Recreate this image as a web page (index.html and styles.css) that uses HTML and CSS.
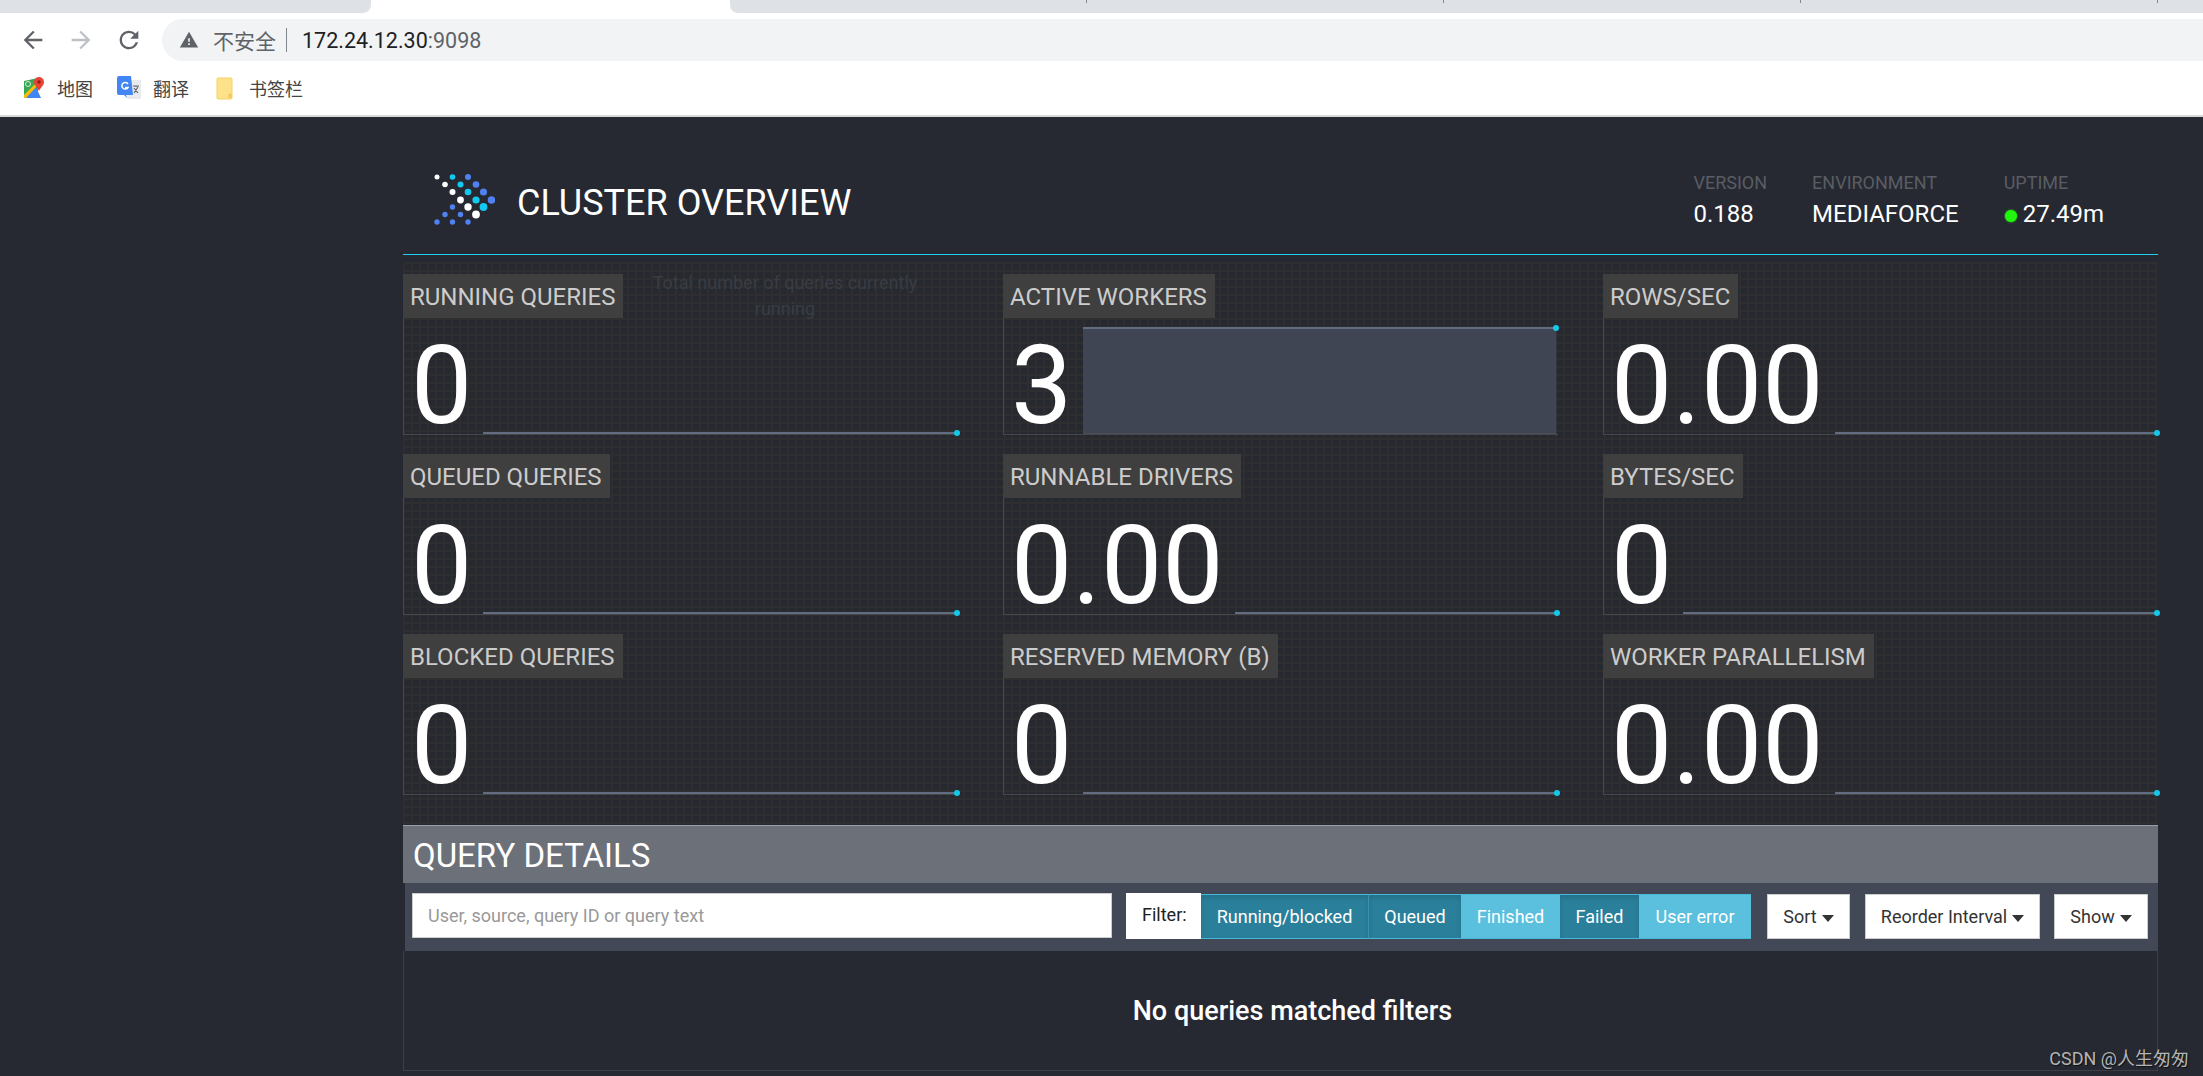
FILE: index.html
```html
<!DOCTYPE html>
<html lang="en">
<head>
<meta charset="utf-8">
<title>Cluster Overview</title>
<link rel="stylesheet" href="styles.css">
</head>
<body>
<div class="tabstrip">
  <div class="tab-left"></div>
  <div class="tab-active"></div>
  <div class="tab-rest">
    <i class="sep s1"></i><i class="sep s2"></i><i class="sep s3"></i><i class="sep s4"></i>
  </div>
</div>
<div class="navbar">
  <svg class="nav-icon" viewBox="0 0 24 24"><path d="M20 11H7.830l5.590-5.590L12 4l-8 8 8 8 1.410-1.410L7.830 13H20v-2z" fill="#5f6368"/></svg>
  <svg class="nav-icon" viewBox="0 0 24 24"><path d="M12 4l-1.410 1.410L16.170 11H4v2h12.170l-5.580 5.590L12 20l8-8z" fill="#bdc1c6"/></svg>
  <svg class="nav-icon" viewBox="0 0 24 24"><path d="M17.650 6.350A7.958 7.958 0 0 0 12 4c-4.420 0-7.990 3.580-7.990 8s3.570 8 7.990 8c3.730 0 6.840-2.550 7.730-6h-2.080A5.990 5.990 0 0 1 12 18c-3.310 0-6-2.690-6-6s2.690-6 6-6c1.660 0 3.140.690 4.220 1.780L13 11h7V4l-2.350 2.350z" fill="#5f6368"/></svg>
  <div class="omnibox">
    <svg class="warn" viewBox="0 0 24 24"><path d="M1 21h22L12 2 1 21zm12-3h-2v-2h2v2zm0-4h-2v-4h2v4z" fill="#5f6368"/></svg>
    <span class="insecure">不安全</span>
    <span class="omni-sep"></span>
    <span class="host">172.24.12.30</span><span class="port">:9098</span>
  </div>
</div>
<div class="bookmarks">
  <div class="bookmark bm-map">
    <svg class="bm-icon" viewBox="0 0 22 22"><path d="M1 4 15 1v17L1 21z" fill="#34a853"/><path d="M1 21 12 8l6 13z" fill="#4285f4"/><path d="M1 18 13 6l2 2L3 21H1z" fill="#fbbc04"/><circle cx="5" cy="7" r="2.500" fill="none" stroke="#dfe7e0" stroke-width="1"/><path d="M16 0a5 5 0 0 1 5 5c0 3.500-3 5-5 9-2-4-5-5.500-5-9a5 5 0 0 1 5-5z" fill="#ea4335"/><circle cx="16" cy="5" r="1.700" fill="#8a1f17"/></svg>
    <span>地图</span>
  </div>
  <div class="bookmark bm-trans">
    <svg class="bm-icon" viewBox="0 0 24 24"><rect x="10" y="4" width="14" height="19" rx="1" fill="#e8eaed"/><path d="M16 10h6M19 10v1M17 17l4-6M17 12l4 5" stroke="#5f6368" stroke-width="1.200" fill="none"/><path d="M2 0h12l2 19H9l1 3-3-3H2a2 2 0 0 1-2-2V2a2 2 0 0 1 2-2z" fill="#4285f4"/><path d="M11 8a3.300 3.300 0 1 0 0 3.500H8" fill="none" stroke="#fff" stroke-width="1.500"/></svg>
    <span>翻译</span>
  </div>
  <div class="bookmark bm-folder">
    <svg class="bm-icon" viewBox="0 0 18 23"><path d="M2 1h13a1 1 0 0 1 1 1v19a1 1 0 0 1-1 1H2a1 1 0 0 1-1-1V2a1 1 0 0 1 1-1z" fill="#fee28a" stroke="#f6d266"/><path d="M13 21v-3a1 1 0 0 1 2 0v3" fill="none" stroke="#e8b93c"/></svg>
    <span>书签栏</span>
  </div>
</div>

<main class="page">
  <div class="container">
    <header class="header">
      <div class="brand">
        <svg class="logo" viewBox="0 0 61 51">
          <circle cx="3" cy="3" r="2.500" fill="#fff"/><circle cx="18.500" cy="3" r="2.800" fill="#12c9f0"/><circle cx="34" cy="3" r="3" fill="#4f82f0"/>
          <circle cx="11" cy="10.500" r="2.800" fill="#fff"/><circle cx="26.500" cy="10.500" r="3" fill="#12c9f0"/><circle cx="42" cy="10.500" r="3.300" fill="#4f82f0"/>
          <circle cx="18.500" cy="18" r="3" fill="#fff"/><circle cx="34" cy="18" r="3.300" fill="#12c9f0"/><circle cx="49.500" cy="18" r="3.600" fill="#4f82f0"/>
          <circle cx="26.500" cy="26" r="3.400" fill="#fff"/><circle cx="42" cy="26" r="3.600" fill="#12c9f0"/><circle cx="57.500" cy="26" r="3.800" fill="#4f82f0"/>
          <circle cx="18.500" cy="33" r="2.700" fill="#4f82f0"/><circle cx="34" cy="33" r="3.700" fill="#fff"/><circle cx="49.500" cy="33" r="3.900" fill="#12c9f0"/>
          <circle cx="11" cy="40.500" r="2.700" fill="#4f82f0"/><circle cx="26.500" cy="40.500" r="2.700" fill="#4f82f0"/><circle cx="42" cy="40.500" r="3.900" fill="#fff"/>
          <circle cx="3" cy="48" r="2.700" fill="#4f82f0"/><circle cx="18.500" cy="48" r="2.700" fill="#4f82f0"/><circle cx="34" cy="48" r="2.700" fill="#4f82f0"/>
        </svg>
        <h1 class="title">CLUSTER OVERVIEW</h1>
      </div>
      <div class="meta">
        <div class="meta-item m-version"><div class="meta-label">VERSION</div><div class="meta-value">0.188</div></div>
        <div class="meta-item m-env"><div class="meta-label">ENVIRONMENT</div><div class="meta-value">MEDIAFORCE</div></div>
        <div class="meta-item"><div class="meta-label">UPTIME</div><div class="meta-value"><span class="status-dot"></span>27.49m</div></div>
      </div>
    </header>

    <section class="stats">
      <article class="stat">
        <div class="stat-label">RUNNING QUERIES</div>
        <div class="ghost-tip">Total number of queries currently running</div>
        <div class="stat-body"><span class="stat-value">0</span><div class="spark"><i class="spark-dot"></i></div></div>
      </article>
      <article class="stat">
        <div class="stat-label">ACTIVE WORKERS</div>
        <div class="stat-body"><span class="stat-value">3</span><div class="spark filled"><i class="spark-dot top"></i></div></div>
      </article>
      <article class="stat">
        <div class="stat-label">ROWS/SEC</div>
        <div class="stat-body"><span class="stat-value">0.00</span><div class="spark"><i class="spark-dot"></i></div></div>
      </article>
      <article class="stat">
        <div class="stat-label">QUEUED QUERIES</div>
        <div class="stat-body"><span class="stat-value">0</span><div class="spark"><i class="spark-dot"></i></div></div>
      </article>
      <article class="stat">
        <div class="stat-label">RUNNABLE DRIVERS</div>
        <div class="stat-body"><span class="stat-value">0.00</span><div class="spark"><i class="spark-dot"></i></div></div>
      </article>
      <article class="stat">
        <div class="stat-label">BYTES/SEC</div>
        <div class="stat-body"><span class="stat-value">0</span><div class="spark"><i class="spark-dot"></i></div></div>
      </article>
      <article class="stat">
        <div class="stat-label">BLOCKED QUERIES</div>
        <div class="stat-body"><span class="stat-value">0</span><div class="spark"><i class="spark-dot"></i></div></div>
      </article>
      <article class="stat">
        <div class="stat-label">RESERVED MEMORY (B)</div>
        <div class="stat-body"><span class="stat-value">0</span><div class="spark"><i class="spark-dot"></i></div></div>
      </article>
      <article class="stat">
        <div class="stat-label">WORKER PARALLELISM</div>
        <div class="stat-body"><span class="stat-value">0.00</span><div class="spark"><i class="spark-dot"></i></div></div>
      </article>
    </section>

    <section class="details">
      <h2 class="details-title">QUERY DETAILS</h2>
      <div class="toolbar">
        <input class="search" type="text" placeholder="User, source, query ID or query text">
        <div class="filter">
          <span class="filter-label">Filter:</span>
          <button class="seg on">Running/blocked</button>
          <button class="seg on">Queued</button>
          <button class="seg">Finished</button>
          <button class="seg on">Failed</button>
          <button class="seg">User error</button>
        </div>
        <button class="drop drop-sort">Sort<i class="caret"></i></button>
        <button class="drop drop-reorder">Reorder Interval<i class="caret"></i></button>
        <button class="drop drop-show">Show<i class="caret"></i></button>
      </div>
      <div class="empty">No queries matched filters</div>
    </section>
  </div>
  <div class="watermark">CSDN @人生匆匆</div>
</main>
</body>
</html>
```
FILE: styles.css
```css
* { box-sizing: border-box; }
html, body { margin: 0; height: 100%; overflow: hidden; }
body { background: #262932; font-family: Roboto, "Noto Sans CJK SC", sans-serif; display: flex; flex-direction: column; }

.tabstrip { height: 13px; display: flex; background: #fff; flex: none; }
.tab-left { width: 371px; background: #dee1e6; border-bottom-right-radius: 8px; }
.tab-active { width: 359px; background: #fff; }
.tab-rest { flex: 1; background: #dee1e6; border-bottom-left-radius: 8px; position: relative; }
.sep { position: absolute; top: 0; width: 1px; height: 3px; background: #888; }
.s1 { left: 356px; } .s2 { left: 713px; } .s3 { left: 1070px; } .s4 { left: 1427px; }

.navbar { height: 48px; background: #fff; flex: none; display: flex; align-items: flex-start; padding: 6px 0 0 19px; }
.nav-icon { width: 28px; height: 28px; margin: 7px 20px 0 0; flex: none; }
.nav-icon:nth-child(3) { margin-right: 19px; }
.omnibox { flex: 1; height: 42px; margin-right: -30px; background: #f1f3f4; border-radius: 21px; display: flex; align-items: center; padding-left: 17px; font-size: 21.500px; }
.warn { width: 20px; height: 20px; margin-right: 14px; flex: none; }
.insecure { font-family: "Noto Sans CJK SC", sans-serif; font-size: 21px; color: #5f6368; }
.omni-sep { width: 1px; height: 24px; background: #80868b; margin: 0 15px 0 10px; }
.host { color: #202124; }
.port { color: #5f6368; }

.bookmarks { height: 54px; background: #fff; flex: none; display: flex; align-items: center; padding-left: 23px; }
.bookmark { display: flex; align-items: center; font-family: "Noto Sans CJK SC", sans-serif; font-size: 18px; color: #444; }
.bm-icon { flex: none; }
.bm-map { margin-right: 24px; }
.bm-map .bm-icon { width: 22px; height: 22px; margin-right: 12px; }
.bm-trans { margin-right: 27px; }
.bm-trans .bm-icon { width: 24px; height: 24px; margin-right: 12px; }
.bm-folder .bm-icon { width: 18px; height: 23px; margin-right: 15px; }

.page { flex: 1; border-top: 2px solid #d9d9d9; padding: 0 45px 0 403px; position: relative; min-height: 0; }
.container { width: 1755px; }

.header { height: 138px; border-bottom: 1px solid #1fd0f0; display: flex; justify-content: space-between; padding: 57px 54px 0 31px; }
.brand { display: flex; align-items: flex-start; }
.logo { width: 61px; height: 51px; flex: none; }
.title { margin: 8px 0 0 22px; font-size: 36px; font-weight: 400; line-height: 42px; color: #fff; }
.meta { display: flex; margin-top: -3px; }
.meta-item { color: #fff; }
.m-version { margin-right: 45px; }
.m-env { margin-right: 45px; }
.meta-label { font-size: 18px; line-height: 24px; color: #5a5d63; }
.meta-value { font-size: 24px; line-height: 36px; margin-top: 1px; display: flex; align-items: center; }
.status-dot { flex: none; width: 12px; height: 12px; border-radius: 50%; background: #22f50c; box-shadow: 0 0 2px #22f50c; margin: 3px 6px 0 1px; }

.stats {
  margin-top: 7px; height: 563px; padding-top: 12px;
  display: grid; grid-template-columns: repeat(3, 555px); column-gap: 45px; grid-auto-rows: 160px; row-gap: 20px;
  background-color: #272931;
  background-image: linear-gradient(#2e2e30 2px, transparent 2px), linear-gradient(90deg, #2e2e30 2px, transparent 2px);
  background-size: 8px 8px;
}
.stat { position: relative; display: flex; flex-direction: column; align-items: flex-start; }
.stat-label { height: 44px; padding: 0 8px 0 7px; background: #3f3f3f; color: #ccc; font-size: 24px; line-height: 46px; white-space: nowrap; }
.stat-body { width: 100%; height: 117px; border-left: 1px solid #45474b; border-bottom: 1px solid #45474b; display: flex; align-items: flex-end; padding-left: 7px; }
.stat-value { font-size: 109px; font-weight: 400; line-height: 137px; height: 116px; color: #fff; margin-right: 11px; flex: none; }
.spark { flex: 1; height: 107px; border-bottom: 2px solid #626c80; margin-right: 1px; position: relative; }
.spark.filled { background: #3f4553; border-top: 2px solid #626c80; border-right: 1px solid #33353a; border-bottom: 1px solid #4a4d55; }
.spark-dot { position: absolute; right: -3px; bottom: -4px; width: 6px; height: 6px; border-radius: 50%; background: #14c8ea; }
.spark-dot.top { top: -4px; bottom: auto; }
.ghost-tip { position: absolute; left: 232px; top: -4px; width: 300px; font-size: 18px; line-height: 26px; text-align: center; color: #393c43; }

.details-title { margin: 0; height: 58px; padding-left: 10px; background: #6c7079; border-top: 1px solid #9ba0a6; font-size: 33px; font-weight: 400; line-height: 59px; color: #fff; }
.toolbar { height: 68px; background: #434856; display: flex; align-items: flex-start; padding: 10px 0 0 7px; margin-left: 2px; }
.search { width: 700px; height: 45px; border: 1px solid #ccc; padding: 0 15px; font: 18px Roboto, sans-serif; background: #fff; flex: none; }
.search::placeholder { color: #999; }
.filter { display: flex; margin-left: 14px; height: 46px; flex: none; }
.filter-label { width: 75px; background: #fff; color: #222; font-size: 18px; line-height: 44px; padding-left: 16px; }
.seg { height: 45px; margin-top: 1px; border: 1px solid #46b8da; border-width: 1px 0; background: #5bc0de; color: #fff; font: 18px Roboto, sans-serif; padding: 0; }
.seg.on { background: #2a7f9b; box-shadow: inset 0 3px 5px rgba(0,0,0,.125); }
.seg:nth-of-type(1) { width: 167px; }
.seg:nth-of-type(2) { width: 93px; border-left: 1px solid #3d93ad; }
.seg:nth-of-type(3) { width: 99px; }
.seg:nth-of-type(4) { width: 79px; }
.seg:nth-of-type(5) { width: 112px; }
.drop { height: 45px; margin-top: 1px; padding: 0; background: #fff; border: 1px solid #ccc; color: #333; font: 18px Roboto, sans-serif; flex: none; }
.drop-sort { width: 83px; margin-left: 16px; }
.drop-reorder { width: 175px; margin-left: 15px; }
.drop-show { width: 94px; margin-left: 14px; }
.caret { display: inline-block; margin-left: 5px; vertical-align: middle; border-top: 7px solid #333; border-left: 6px solid transparent; border-right: 6px solid transparent; }
.empty { height: 120px; border: 1px solid #3c3f45; border-top: 0; padding-left: 24px; color: #fff; font-size: 27px; font-weight: 500; text-align: center; line-height: 121px; }

.watermark { position: absolute; right: 14px; bottom: 6px; font-size: 18px; color: #b4b4b4; text-shadow: 1px 1px 1px #111; }
```
